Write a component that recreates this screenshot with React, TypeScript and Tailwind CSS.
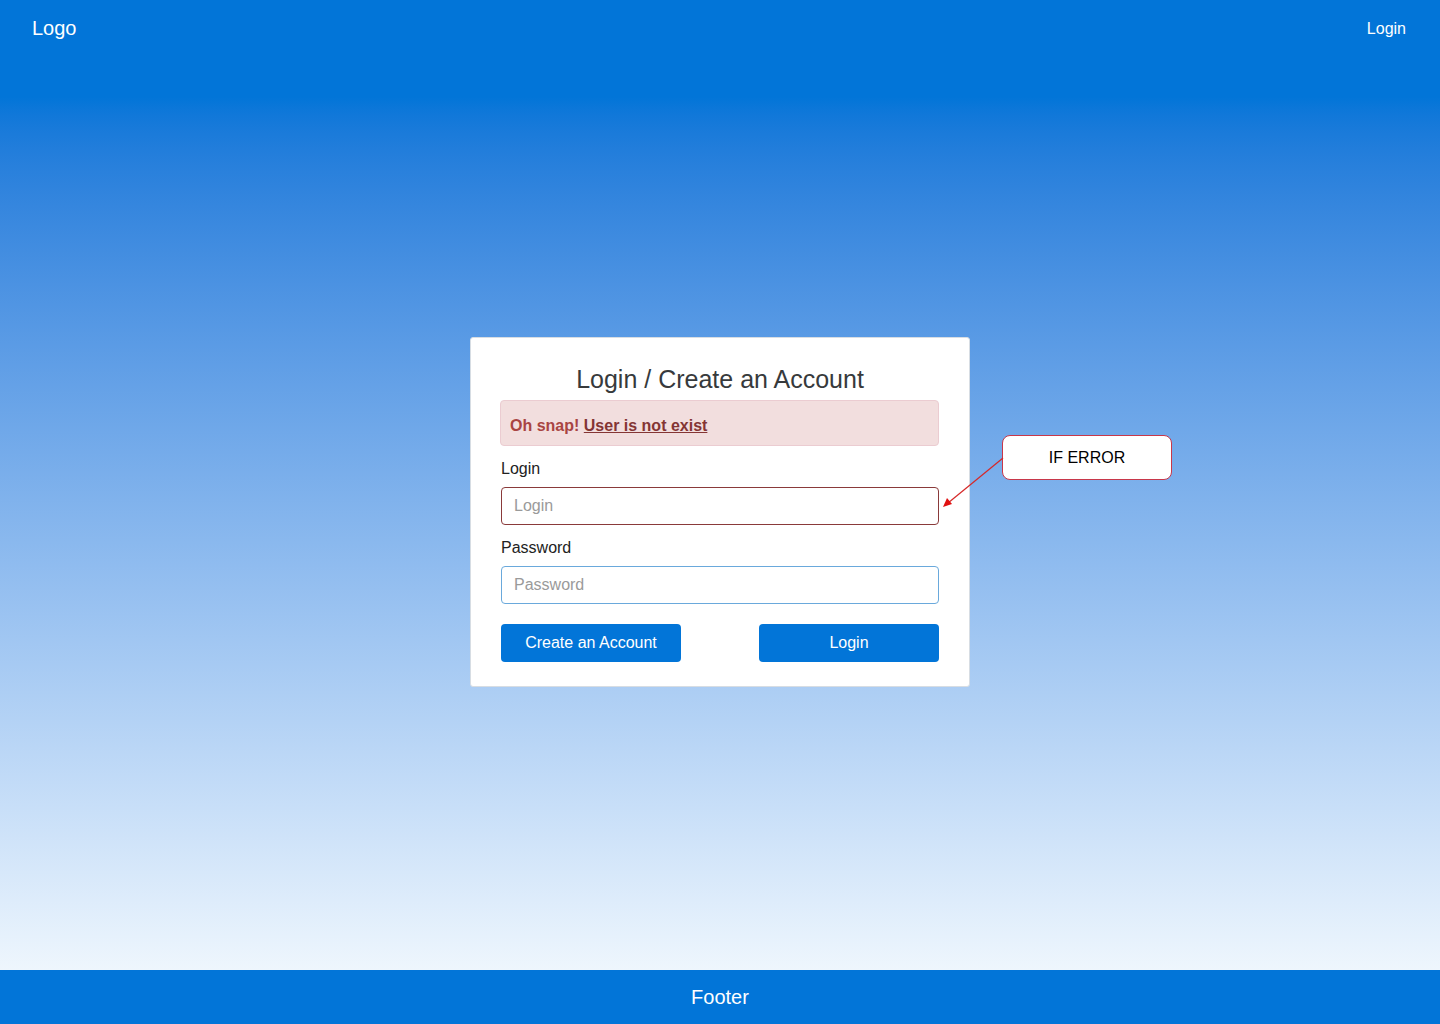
import React from "react";

export default function App() {
  return (
    <div className="w-[1440px] h-[1024px] flex flex-col" style={{ fontFamily: '"Liberation Sans", Arial, sans-serif' }}>
      <div className="h-[970px] flex flex-col bg-gradient-to-b from-[#0275d8] from-[10%] to-[#eef6fd]">
        <header className="h-[54px] flex items-start justify-between pl-8 pr-[34px]">
          <div className="text-white text-[20px] leading-6 mt-4">Logo</div>
          <div className="text-white text-[16px] leading-5 mt-[19px]">Login</div>
        </header>
        <main className="flex-1 flex items-center justify-center">
          <div className="relative w-[500px] bg-white border border-[#d7dde3] rounded-[3px] px-[30px] pt-[26px] pb-6">
            <h1 className="text-center text-[25px] leading-[30px] text-[#373a3c]">Login / Create an Account</h1>
            <div className="mt-[6px] -ml-px bg-[#f2dede] border border-[#ebccd1] rounded-[4px] pl-[9px] pt-[15px] pb-[9px] text-[16px] leading-5 font-bold text-[#a94442]">
              Oh snap! <span className="underline text-[#843534]">User is not exist</span>
            </div>
            <label className="block mt-[13px] text-[16px] leading-5 text-[#222]">Login</label>
            <input
              className="mt-2 w-full h-[38px] border border-[#8a3a3a] rounded-[4px] px-3 text-[16px] placeholder:text-[#9a9a9a] outline-none"
              placeholder="Login"
            />
            <label className="block mt-[13px] text-[16px] leading-5 text-[#222]">Password</label>
            <input
              className="mt-2 w-full h-[38px] border border-[#6aa9dc] rounded-[4px] px-3 text-[16px] placeholder:text-[#9a9a9a] outline-none"
              placeholder="Password"
            />
            <div className="mt-5 flex justify-between">
              <button className="w-[180px] h-[38px] bg-[#0275d8] rounded-[4px] text-white text-[16px]">Create an Account</button>
              <button className="w-[180px] h-[38px] bg-[#0275d8] rounded-[4px] text-white text-[16px]">Login</button>
            </div>

            <div className="absolute left-[531px] top-[97px] w-[170px] h-[45px] bg-white border border-[#c8374a] rounded-[8px] flex items-center justify-center text-[16px] text-black">
              IF ERROR
            </div>
            <svg className="absolute left-[469px] top-[117px]" width="66" height="56" viewBox="0 0 66 56">
              <line x1="63" y1="3" x2="8" y2="48" stroke="#d62828" strokeWidth="1.2" />
              <polygon points="3,52 7,43 12,49" fill="#e01010" />
            </svg>
          </div>
        </main>
      </div>
      <footer className="h-[54px] bg-[#0275d8] flex items-center justify-center text-white text-[20px]">Footer</footer>
    </div>
  );
}
